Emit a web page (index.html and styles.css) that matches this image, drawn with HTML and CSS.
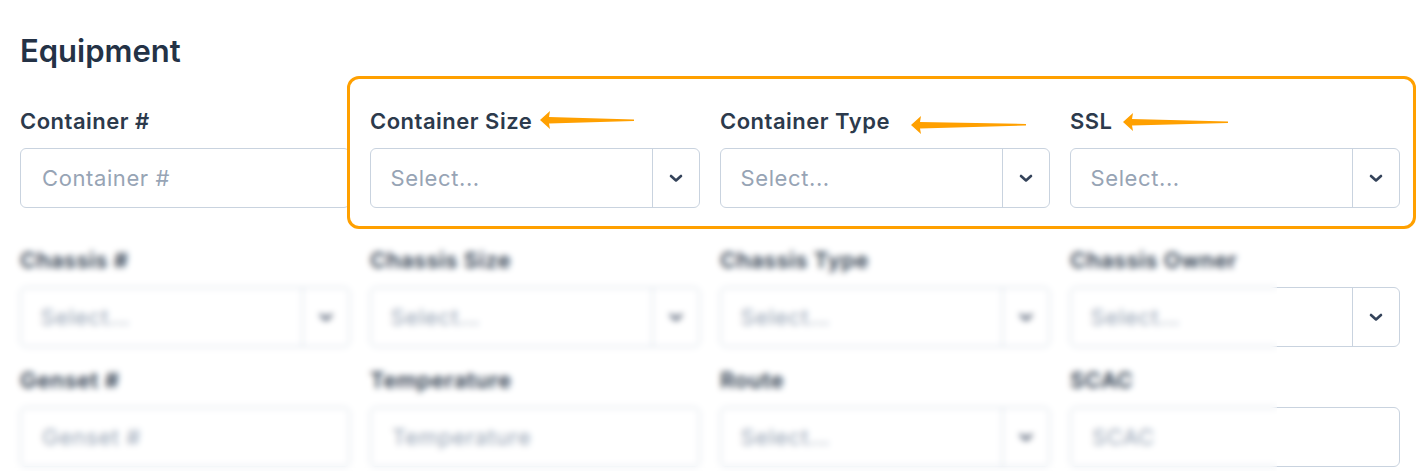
FILE: index.html
```html
<!DOCTYPE html>
<html lang="en">
<head>
<meta charset="utf-8">
<title>Equipment</title>
<link rel="stylesheet" href="styles.css">
</head>
<body>
<div class="page">
  <h2 class="title">Equipment</h2>

  <div class="row row-first">
    <div class="field">
      <label class="label">Container #</label>
      <div class="input"><span class="ph">Container #</span></div>
    </div>
    <div class="field">
      <label class="label">Container Size</label>
      <div class="select"><span class="sel-main ph">Select...</span><span class="sel-btn"><svg class="chev" viewBox="0 0 14 9" width="14" height="9"><path d="M2 2 L7 6.5 L12 2" fill="none" stroke="#34435a" stroke-width="2.6" stroke-linecap="round" stroke-linejoin="round"/></svg></span></div>
    </div>
    <div class="field">
      <label class="label">Container Type</label>
      <div class="select"><span class="sel-main ph">Select...</span><span class="sel-btn"><svg class="chev" viewBox="0 0 14 9" width="14" height="9"><path d="M2 2 L7 6.5 L12 2" fill="none" stroke="#34435a" stroke-width="2.6" stroke-linecap="round" stroke-linejoin="round"/></svg></span></div>
    </div>
    <div class="field">
      <label class="label">SSL</label>
      <div class="select"><span class="sel-main ph">Select...</span><span class="sel-btn"><svg class="chev" viewBox="0 0 14 9" width="14" height="9"><path d="M2 2 L7 6.5 L12 2" fill="none" stroke="#34435a" stroke-width="2.6" stroke-linecap="round" stroke-linejoin="round"/></svg></span></div>
    </div>
  </div>

  <div class="row row-second">
    <div class="field">
      <label class="label">Chassis #</label>
      <div class="select"><span class="sel-main ph">Select...</span><span class="sel-btn"><svg class="chev" viewBox="0 0 14 9" width="14" height="9"><path d="M2 2 L7 6.5 L12 2" fill="none" stroke="#34435a" stroke-width="2.6" stroke-linecap="round" stroke-linejoin="round"/></svg></span></div>
    </div>
    <div class="field">
      <label class="label">Chassis Size</label>
      <div class="select"><span class="sel-main ph">Select...</span><span class="sel-btn"><svg class="chev" viewBox="0 0 14 9" width="14" height="9"><path d="M2 2 L7 6.5 L12 2" fill="none" stroke="#34435a" stroke-width="2.6" stroke-linecap="round" stroke-linejoin="round"/></svg></span></div>
    </div>
    <div class="field">
      <label class="label">Chassis Type</label>
      <div class="select"><span class="sel-main ph">Select...</span><span class="sel-btn"><svg class="chev" viewBox="0 0 14 9" width="14" height="9"><path d="M2 2 L7 6.5 L12 2" fill="none" stroke="#34435a" stroke-width="2.6" stroke-linecap="round" stroke-linejoin="round"/></svg></span></div>
    </div>
    <div class="field">
      <label class="label">Chassis Owner</label>
      <div class="select"><span class="sel-main ph">Select...</span><span class="sel-btn"><svg class="chev" viewBox="0 0 14 9" width="14" height="9"><path d="M2 2 L7 6.5 L12 2" fill="none" stroke="#34435a" stroke-width="2.6" stroke-linecap="round" stroke-linejoin="round"/></svg></span></div>
    </div>
  </div>

  <div class="row row-third">
    <div class="field">
      <label class="label">Genset #</label>
      <div class="input"><span class="ph">Genset #</span></div>
    </div>
    <div class="field">
      <label class="label">Temperature</label>
      <div class="input"><span class="ph">Temperature</span></div>
    </div>
    <div class="field">
      <label class="label">Route</label>
      <div class="select"><span class="sel-main ph">Select...</span><span class="sel-btn"><svg class="chev" viewBox="0 0 14 9" width="14" height="9"><path d="M2 2 L7 6.5 L12 2" fill="none" stroke="#34435a" stroke-width="2.6" stroke-linecap="round" stroke-linejoin="round"/></svg></span></div>
    </div>
    <div class="field">
      <label class="label">SCAC</label>
      <div class="input"><span class="ph">SCAC</span></div>
    </div>
  </div>
</div>

<div class="blur-veil"></div>
<div class="highlight-box"></div>

<svg class="arrow arrow-size" width="94" height="18" viewBox="0 0 94 18"><polygon points="0,9 10,0 9,6 94,8.4 94,10 9,12.4 10,18" fill="#ffa000"/></svg>
<svg class="arrow arrow-type" width="115" height="18" viewBox="0 0 115 18"><polygon points="0,9 10,0 9,6 115,8 115,9.6 9,12.4 10,18" fill="#ffa000"/></svg>
<svg class="arrow arrow-ssl" width="105" height="18" viewBox="0 0 105 18"><polygon points="0,9 10,0 9,6 105,8.4 105,10 9,12.4 10,18" fill="#ffa000"/></svg>
</body>
</html>
```

FILE: styles.css
```css
* { box-sizing: border-box; }

html, body {
  margin: 0;
  padding: 0;
  background: #ffffff;
}

body {
  font-family: Inter, "Noto Sans", "Liberation Sans", sans-serif;
  color: #2c3a4c;
  width: 1422px;
  height: 471px;
  overflow: hidden;
  position: relative;
}

.page {
  padding: 32px 22px 0 20px;
}

.title {
  margin: 0;
  font-size: 31px;
  line-height: 37px;
  font-weight: 600;
  color: #243246;
}

.row {
  display: grid;
  grid-template-columns: repeat(4, 330px);
  column-gap: 20px;
}

.row-first { margin-top: 39px; }
.row-second { margin-top: 39px; }
.row-third { margin-top: 20px; }

.field {
  display: flex;
  flex-direction: column;
}

.label {
  font-size: 22px;
  line-height: 26px;
  font-weight: 600;
  letter-spacing: 0.5px;
  color: #2c3a4c;
  margin-bottom: 14px;
  white-space: nowrap;
}

.input,
.select {
  height: 60px;
  border: 1.5px solid #c9d3df;
  border-radius: 6px;
  background: #ffffff;
  display: flex;
  align-items: center;
}

.input {
  padding-left: 21px;
}

.ph {
  font-size: 22px;
  font-weight: 400;
  letter-spacing: 0.6px;
  color: #97a4b5;
  white-space: nowrap;
}

.sel-main {
  flex: 1;
  padding-left: 19.5px;
}

.sel-btn {
  width: 47px;
  align-self: stretch;
  border-left: 1.5px solid #c9d3df;
  display: flex;
  align-items: center;
  justify-content: center;
}

.chev { display: block; }

.blur-veil {
  position: absolute;
  left: 0;
  top: 232px;
  width: 1277px;
  height: 239px;
  backdrop-filter: blur(3px);
  -webkit-backdrop-filter: blur(3px);
}

.highlight-box {
  position: absolute;
  left: 347px;
  top: 76px;
  width: 1069px;
  height: 153px;
  border: 3px solid #ffa000;
  border-radius: 12px;
}

.arrow {
  position: absolute;
  display: block;
}

.arrow-size { left: 540px; top: 111px; }
.arrow-type { left: 911px; top: 116px; }
.arrow-ssl { left: 1123px; top: 113px; }
```
